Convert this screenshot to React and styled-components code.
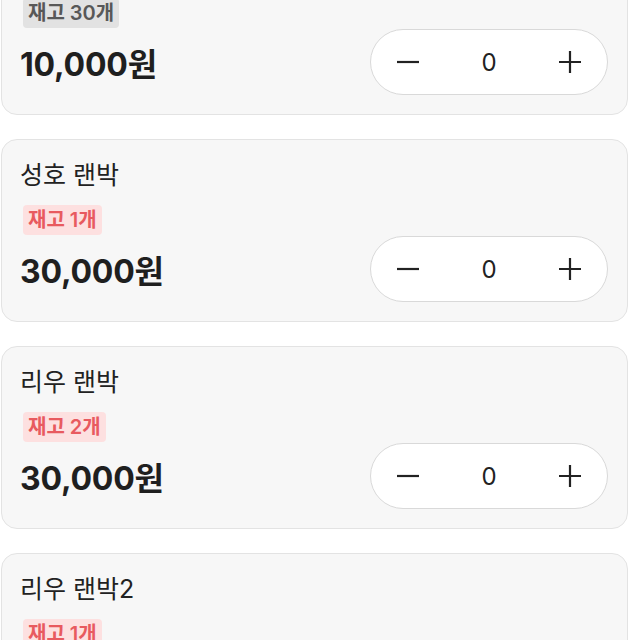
import React, { useState } from "react";
import styled, { createGlobalStyle } from "styled-components";

const GlobalStyle = createGlobalStyle`
  body {
    margin: 0;
    background: #ffffff;
    font-family: Inter, "Noto Sans CJK KR", sans-serif;
    color: #1f1f1f;
  }
`;

const items = [
  { id: 1, name: "민호 랜박", stock: 30, price: 10000 },
  { id: 2, name: "성호 랜박", stock: 1, price: 30000 },
  { id: 3, name: "리우 랜박", stock: 2, price: 30000 },
  { id: 4, name: "리우 랜박2", stock: 1, price: 30000 },
];

function Stepper() {
  const [count, setCount] = useState(0);
  return (
    <StepperBox>
      <StepButton aria-label="minus" onClick={() => setCount(Math.max(0, count - 1))}>
        <svg width="24" height="24" viewBox="0 0 24 24">
          <path d="M1 12h22" stroke="#222" strokeWidth="2.2" />
        </svg>
      </StepButton>
      <Count>{count}</Count>
      <StepButton aria-label="plus" onClick={() => setCount(count + 1)}>
        <svg width="24" height="24" viewBox="0 0 24 24">
          <path d="M1 12h22M12 1v22" stroke="#222" strokeWidth="2.2" />
        </svg>
      </StepButton>
    </StepperBox>
  );
}

export default function App() {
  return (
    <>
      <GlobalStyle />
      <List>
        {items.map((item) => (
          <Card key={item.id}>
            <Title>{item.name}</Title>
            <Badge low={item.stock < 10}>재고 {item.stock}개</Badge>
            <Row>
              <Price>{item.price.toLocaleString("ko-KR")}원</Price>
              <Stepper />
            </Row>
          </Card>
        ))}
      </List>
    </>
  );
}

const List = styled.div`
  display: flex;
  flex-direction: column;
  gap: 24px;
  margin-top: -68px;
  padding: 0 12px 0 1px;
`;

const Card = styled.div`
  display: flex;
  flex-direction: column;
  align-items: flex-start;
  background: #f7f7f7;
  border: 1px solid #e3e3e3;
  border-radius: 16px;
  padding: 20px 19px 19px 18px;
`;

const Title = styled.div`
  font-size: 25px;
  line-height: 30px;
  color: #222;
`;

const Badge = styled.span`
  margin: 15px 0 0 3px;
  height: 30px;
  line-height: 30px;
  padding: 0 5px;
  border-radius: 4px;
  font-size: 20px;
  font-weight: 600;
  color: ${(p) => (p.low ? "#e85a5f" : "#585858")};
  background: ${(p) => (p.low ? "#fde0e0" : "#e2e2e2")};
`;

const Row = styled.div`
  align-self: stretch;
  margin-top: 1px;
  display: flex;
  align-items: center;
  justify-content: space-between;
`;

const Price = styled.div`
  font-size: 32px;
  font-weight: 700;
  letter-spacing: -0.2px;
  color: #1f1f1f;
`;

const StepperBox = styled.div`
  display: grid;
  grid-template-columns: 74px 1fr 74px;
  align-items: center;
  width: 238px;
  height: 66px;
  box-sizing: border-box;
  background: #ffffff;
  border: 1px solid #d9d9d9;
  border-radius: 33px;
`;

const StepButton = styled.button`
  display: flex;
  align-items: center;
  justify-content: center;
  height: 100%;
  padding: 0;
  border: none;
  background: transparent;
  cursor: pointer;
`;

const Count = styled.span`
  text-align: center;
  font-size: 24px;
  color: #222;
`;
